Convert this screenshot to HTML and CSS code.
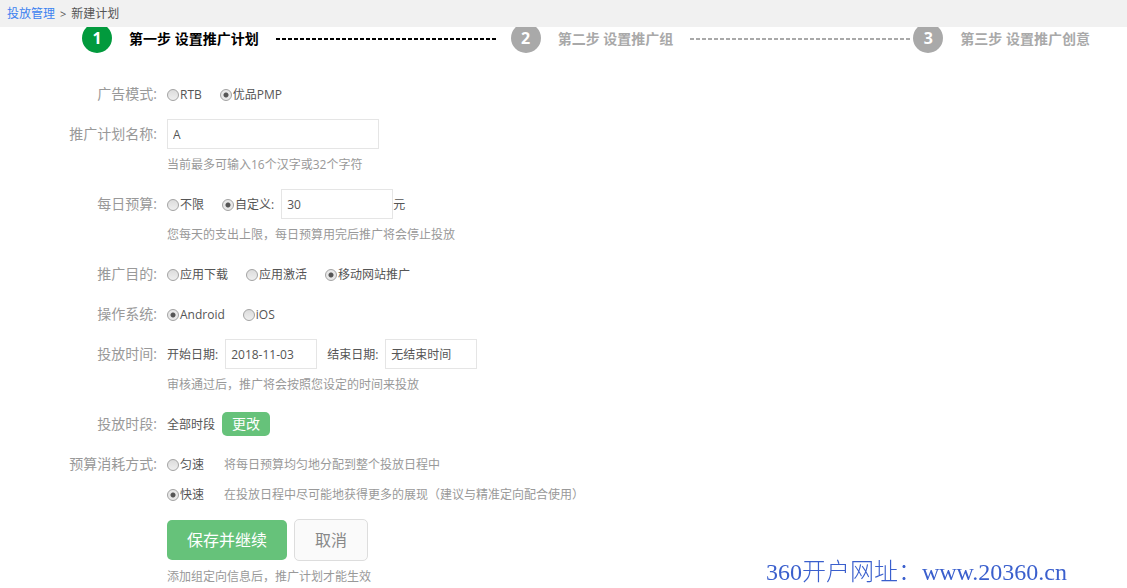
FILE: index.html
```html
<!DOCTYPE html>
<html lang="zh-CN">
<head>
    <meta charset="UTF-8">
    <meta name="viewport" content="width=device-width, initial-scale=1.0">
    <title>新建计划</title>
    <link rel="stylesheet" href="styles.css">
</head>
<body>
    <div class="breadcrumb">
        <a href="#">投放管理</a>
        <span class="sep">&gt;</span>
        <span>新建计划</span>
    </div>

    <ol class="steps">
        <li class="step active">
            <span class="num">1</span>
            <span class="title">第一步 设置推广计划</span>
            <span class="line"></span>
        </li>
        <li class="step">
            <span class="num">2</span>
            <span class="title">第二步 设置推广组</span>
            <span class="line"></span>
        </li>
        <li class="step">
            <span class="num">3</span>
            <span class="title">第三步 设置推广创意</span>
        </li>
    </ol>

    <form class="plan-form">
        <div class="row">
            <span class="name">广告模式:</span>
            <div class="field">
                <div class="options">
                    <label><input type="radio" name="mode">RTB</label>
                    <label><input type="radio" name="mode" checked>优品PMP</label>
                </div>
            </div>
        </div>
        <div class="row">
            <label class="name" for="plan-name">推广计划名称:</label>
            <div class="field">
                <input type="text" id="plan-name" class="text long" value="A">
                <p class="hint">当前最多可输入16个汉字或32个字符</p>
            </div>
        </div>
        <div class="row">
            <span class="name">每日预算:</span>
            <div class="field">
                <div class="options">
                    <label><input type="radio" name="budget">不限</label>
                    <label><input type="radio" name="budget" checked>自定义:</label>
                    <div class="amount">
                        <input type="text" class="text medium" value="30" aria-label="每日预算">
                        <span>元</span>
                    </div>
                </div>
                <p class="hint">您每天的支出上限，每日预算用完后推广将会停止投放</p>
            </div>
        </div>
        <div class="row">
            <span class="name">推广目的:</span>
            <div class="field">
                <div class="options">
                    <label><input type="radio" name="goal">应用下载</label>
                    <label><input type="radio" name="goal">应用激活</label>
                    <label><input type="radio" name="goal" checked>移动网站推广</label>
                </div>
            </div>
        </div>
        <div class="row">
            <span class="name">操作系统:</span>
            <div class="field">
                <div class="options">
                    <label><input type="radio" name="os" checked>Android</label>
                    <label><input type="radio" name="os">iOS</label>
                </div>
            </div>
        </div>
        <div class="row">
            <span class="name">投放时间:</span>
            <div class="field">
                <div class="dates">
                    <label for="start-date">开始日期:</label>
                    <input type="text" id="start-date" class="text short" value="2018-11-03">
                    <label for="end-date">结束日期:</label>
                    <input type="text" id="end-date" class="text short" value="无结束时间">
                </div>
                <p class="hint">审核通过后，推广将会按照您设定的时间来投放</p>
            </div>
        </div>
        <div class="row">
            <span class="name">投放时段:</span>
            <div class="field">
                <div class="period">
                    <span>全部时段</span>
                    <button type="button" class="btn-small">更改</button>
                </div>
            </div>
        </div>
        <div class="row">
            <span class="name">预算消耗方式:</span>
            <div class="field">
                <div class="speed">
                    <label><input type="radio" name="speed">匀速</label>
                    <span class="hint">将每日预算均匀地分配到整个投放日程中</span>
                </div>
                <div class="speed">
                    <label><input type="radio" name="speed" checked>快速</label>
                    <span class="hint">在投放日程中尽可能地获得更多的展现（建议与精准定向配合使用）</span>
                </div>
            </div>
        </div>
        <div class="row">
            <span class="name"></span>
            <div class="field">
                <div class="buttons">
                    <button type="submit" class="btn btn-save">保存并继续</button>
                    <button type="button" class="btn btn-cancel">取消</button>
                </div>
                <p class="hint">添加组定向信息后，推广计划才能生效</p>
            </div>
        </div>
    </form>

    <div class="site-mark">360开户网址：www.20360.cn</div>
</body>
</html>
```

FILE: styles.css
```css
* {
    box-sizing: border-box;
}

body {
    margin: 0;
    font-family: "Open Sans", "Noto Sans CJK SC", sans-serif;
    font-size: 12px;
    line-height: 30px;
    color: #555;
    background: #fff;
}

p, ol {
    margin: 0;
    padding: 0;
}

input, button {
    font-family: inherit;
    font-size: inherit;
    color: inherit;
}

.breadcrumb {
    position: sticky;
    top: 0;
    z-index: 1;
    display: flex;
    gap: 5px;
    height: 27px;
    line-height: 27px;
    padding-left: 7px;
    background: #f1f1f1;
}

.breadcrumb a {
    color: #3c82f0;
    text-decoration: none;
}

.breadcrumb .sep {
    font-size: 11px;
}

/* steps, partly under the breadcrumb bar */
.steps {
    display: flex;
    margin-top: -4px;
    padding-left: 82px;
    list-style: none;
}

.step {
    display: flex;
    align-items: center;
    margin-right: 3px;
    font-size: 14px;
    font-weight: bold;
    color: #a9a9a9;
    white-space: nowrap;
}

.step.active {
    margin-right: 15px;
    color: #000;
}

.step .num {
    width: 30px;
    height: 30px;
    margin-right: 17px;
    border-radius: 50%;
    font-size: 16px;
    text-align: center;
    color: #fff;
    background: #a9a9a9;
}

.step.active .num {
    background: #029a3d;
}

.step .title {
    padding-top: 2px;
    line-height: 28px;
}

.step .line {
    width: 220px;
    height: 2px;
    margin: 2px 0 0 17px;
    background: repeating-linear-gradient(to right, currentColor 0 4px, transparent 4px 6px);
}

.plan-form {
    padding-top: 26px;
}

.row {
    display: flex;
    margin-bottom: 10px;
}

.name {
    width: 157px;
    margin-right: 10px;
    font-size: 14px;
    text-align: right;
    color: #999;
}

.options, .options label, .amount, .dates, .period, .speed, .speed label {
    display: flex;
    align-items: center;
}

.field label, .field span, .hint {
    padding-top: 2px;
    line-height: 28px;
}

.options label {
    margin-right: 18px;
}

.options .amount {
    margin-left: -11px;
}

input[type="radio"] {
    appearance: none;
    width: 12px;
    height: 12px;
    margin: 0 1px 0 0;
    border: 1px solid #a3a3a3;
    border-radius: 50%;
    background: linear-gradient(#dcdcdc, #efefef);
}

input[type="radio"]:checked {
    background: radial-gradient(circle, #555 0 2px, #e8e8e8 3px);
}

.text {
    height: 30px;
    padding: 0 5px;
    border: 1px solid #e5e5e5;
    background: #fff;
}

.text.long {
    display: block;
    width: 212px;
}

.text.medium {
    width: 112px;
}

.text.short {
    width: 92px;
    margin: 0 10px 0 7px;
}

.hint {
    color: #999;
}

.speed .hint {
    margin-left: 20px;
}

.btn-small {
    width: 48px;
    height: 24px;
    margin-left: 7px;
    padding: 0;
    border: 0;
    border-radius: 5px;
    font-size: 14px;
    line-height: 24px;
    color: #fff;
    background: #66c27a;
}

.buttons {
    display: flex;
    align-items: center;
    gap: 7px;
}

.btn {
    padding: 0 0 2px;
    border: 0;
    border-radius: 5px;
    font-size: 16px;
    cursor: pointer;
}

.btn-save {
    width: 120px;
    height: 40px;
    color: #fff;
    background: #66c27a;
}

.btn-cancel {
    width: 74px;
    height: 42px;
    border: 1px solid #ddd;
    color: #888;
    background: #fafafa;
}

.site-mark {
    position: fixed;
    right: 60px;
    bottom: 0;
    font-family: "Liberation Serif", "Noto Sans CJK SC", serif;
    font-size: 24px;
    font-weight: 300;
    line-height: 32px;
    color: #3a5fcd;
}
```
